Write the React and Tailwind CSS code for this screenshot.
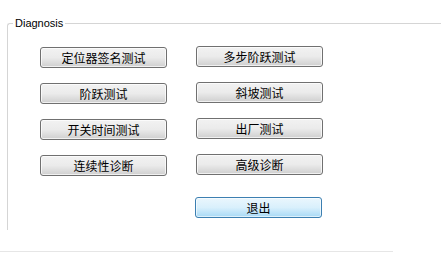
const LEFT = ["定位器签名测试", "阶跃测试", "开关时间测试", "连续性诊断"];
const RIGHT = ["多步阶跃测试", "斜坡测试", "出厂测试", "高级诊断"];

function WinButton({ label, primary = false, className = "" }) {
  const tone = primary
    ? "border-[#3c7fb1] bg-gradient-to-b from-[#eaf6fd] via-[#d9f0fc] to-[#a7d9f5] shadow-[inset_0_0_0_1px_rgba(255,255,255,0.6)]"
    : "border-[#707070] bg-gradient-to-b from-[#f2f2f2] via-[#ebebeb] to-[#cfcfcf] shadow-[inset_0_0_0_1px_rgba(255,255,255,0.7)]";
  return (
    <button
      className={`flex h-[21px] w-[127px] items-center justify-center rounded-[3px] border text-[12px] leading-none text-black ${tone} ${className}`}
      style={{ fontFamily: '"Noto Sans CJK SC", sans-serif' }}
    >
      {label}
    </button>
  );
}

export default function App() {
  return (
    <div className="relative h-[263px] w-[441px] overflow-hidden bg-white">
      <div className="relative ml-[7px] mt-[23px] h-[207px] rounded-tl-[3px] border-l border-t border-[#d5d5d5]">
        <span
          className="absolute -top-[8px] left-[5px] bg-white px-[2px] text-[11px] leading-[14px] text-black"
          style={{ fontFamily: '"Liberation Sans", sans-serif' }}
        >
          Diagnosis
        </span>
        <div className="flex gap-[29px] pl-[32px] pt-[23px]">
          <div className="flex flex-col gap-[15px]">
            {LEFT.map((t) => (
              <WinButton key={t} label={t} className="w-[126px]" />
            ))}
          </div>
          <div className="-mt-px flex flex-col gap-[15px]">
            {RIGHT.map((t) => (
              <WinButton key={t} label={t} />
            ))}
            <WinButton label="退出" primary className="-ml-px mt-[7px]" />
          </div>
        </div>
      </div>
      <div className="mt-[21px] h-px w-[393px] bg-[#e6e6e6]" />
    </div>
  );
}
